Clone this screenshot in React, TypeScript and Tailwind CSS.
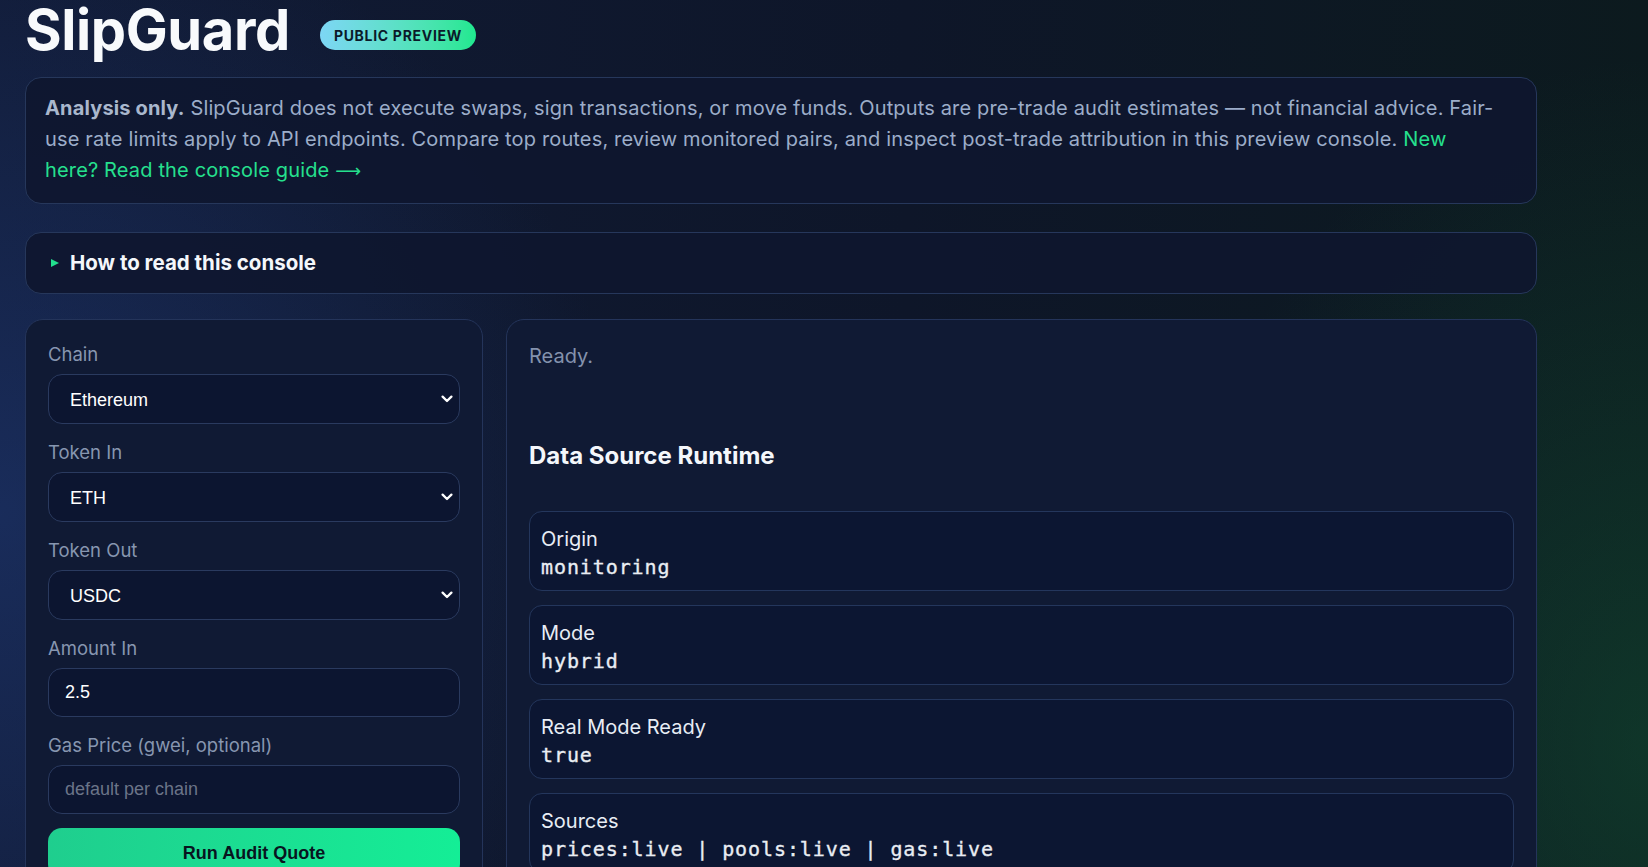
import React from "react";

const Chevron = () => (
  <svg
    width="12"
    height="8"
    viewBox="0 0 12 8"
    className="pointer-events-none absolute right-[7px] top-1/2 -translate-y-1/2"
  >
    <path
      d="M1.6 1.6 L6 6 L10.4 1.6"
      stroke="#ffffff"
      strokeWidth="2.3"
      fill="none"
      strokeLinecap="round"
      strokeLinejoin="round"
    />
  </svg>
);

const labelCls =
  "block text-[18.5px] leading-[24px] text-[#8796b0] mb-[8px]";

function SelectField({ label, value, options }: { label: string; value: string; options: string[] }) {
  return (
    <div>
      <label className={labelCls}>{label}</label>
      <div className="relative">
        <select
          defaultValue={value}
          className="block h-[50px] w-full appearance-none rounded-[14px] border border-[#2a3a5f] bg-[#0c1530] pl-[21px] pr-[30px] pt-[2px] text-[18px] text-white outline-none [font-family:'Liberation_Sans',Arial,sans-serif]"
        >
          {options.map((o) => (
            <option key={o} value={o}>
              {o}
            </option>
          ))}
        </select>
        <Chevron />
      </div>
    </div>
  );
}

function InputField({ label, value, placeholder }: { label: string; value?: string; placeholder?: string }) {
  return (
    <div>
      <label className={labelCls}>{label}</label>
      <input
        defaultValue={value}
        placeholder={placeholder}
        className="block h-[49px] w-full rounded-[14px] border border-[#2a3a5f] bg-[#0c1530] pl-[16px] text-[18px] text-white outline-none placeholder:text-[#6b7488] [font-family:'Liberation_Sans',Arial,sans-serif]"
      />
    </div>
  );
}

function RuntimeCard({ label, value }: { label: string; value: string }) {
  return (
    <div className="rounded-[13px] border border-[#24365c] bg-[#0c1632] px-[11px] pt-[13px] pb-[9px]">
      <div className="text-[20px] leading-[28px] text-[#e8edf5]">{label}</div>
      <div className="text-[20px] leading-[28px] tracking-[0.9px] text-[#e9edf3] [font-family:'DejaVu_Sans_Mono',monospace] [-webkit-text-stroke:0.35px_#e9edf3]">
        {value}
      </div>
    </div>
  );
}

export default function App() {
  return (
    <div className="min-h-screen w-full bg-[#0d1528] bg-[radial-gradient(ellipse_38%_55%_at_0%_45%,rgba(35,65,135,0.45),transparent),radial-gradient(ellipse_30%_60%_at_100%_65%,rgba(22,105,62,0.35),transparent),linear-gradient(90deg,#111b36_0%,#0e1629_55%,#0c1a1e_100%)] [font-family:Inter,sans-serif]">
      <div className="max-w-[1562px] px-[25px] pt-[2px] pb-[40px]">
        {/* Header */}
        <div className="flex h-[56px] items-center gap-[30px]">
          <h1 className="text-[56px] font-bold leading-[56px] tracking-[-0.4px] text-[#f8fafc]">
            SlipGuard
          </h1>
          <span className="mt-[10px] flex h-[30px] items-center rounded-full bg-gradient-to-r from-[#7dd6f5] to-[#1fe88f] px-[14px] text-[14px] font-bold tracking-[0.05em] text-[#0b1a2a]">
            PUBLIC PREVIEW
          </span>
        </div>

        {/* Info box */}
        <div className="mt-[19px] rounded-[16px] border border-[#26375b] bg-[#0e162f]/90 pl-[19px] pr-[36px] pt-[15px] pb-[17px] text-[20px] leading-[31px] tracking-[0.15px] text-[#9cadc9]">
          <strong className="font-bold text-[#a9b7cd]">Analysis only.</strong> SlipGuard does not execute swaps, sign
          transactions, or move funds. Outputs are pre-trade audit estimates — not financial advice. Fair-use rate limits
          apply to API endpoints. Compare top routes, review monitored pairs, and inspect post-trade attribution in this
          preview console.{" "}
          <a className="text-[#25e08e]">
            New here? Read the console guide <span className="[font-family:'DejaVu_Sans',sans-serif] text-[18px]">⟶</span>
          </a>
        </div>

        {/* Accordion */}
        <div className="mt-[28px] flex h-[62px] items-center rounded-[16px] border border-[#26375b] bg-[#0e162f]/90 pl-[24px]">
          <svg width="10" height="10" viewBox="0 0 10 10" className="mr-[10px]">
            <path d="M1 1 L9 5 L1 9 Z" fill="#22e08e" />
          </svg>
          <span className="text-[20.5px] font-bold text-[#f4f7fb]">How to read this console</span>
        </div>

        {/* Panels */}
        <div className="mt-[25px] grid grid-cols-[458px_1fr] items-start gap-[23px]">
          <div className="rounded-[18px] border border-[#24345a] bg-[#101a34] px-[22px] pt-[22px] pb-[22px]">
            <div className="flex flex-col gap-[16px]">
              <SelectField label="Chain" value="Ethereum" options={["Ethereum", "Arbitrum", "Base", "Optimism"]} />
              <SelectField label="Token In" value="ETH" options={["ETH", "USDC", "USDT", "WBTC"]} />
              <SelectField label="Token Out" value="USDC" options={["USDC", "ETH", "USDT", "DAI"]} />
              <InputField label="Amount In" value="2.5" />
              <InputField label="Gas Price (gwei, optional)" placeholder="default per chain" />
            </div>
            <button className="mt-[14px] h-[50px] w-full rounded-[14px] bg-gradient-to-r from-[#1fce8e] to-[#14ee96] text-[18px] font-bold text-[#08141f] [font-family:'Liberation_Sans',Arial,sans-serif]">
              Run Audit Quote
            </button>
            <div className="h-[200px]" />
          </div>

          <div className="rounded-[18px] border border-[#24345a] bg-[#101a34] px-[22px] pt-[22px] pb-[22px]">
            <div className="text-[20px] leading-[28px] text-[#8492ad]">Ready.</div>
            <h2 className="mt-[71px] text-[24px] font-bold leading-[30px] text-[#f4f7fb]">Data Source Runtime</h2>
            <div className="mt-[40px] flex flex-col gap-[14px]">
              <RuntimeCard label="Origin" value="monitoring" />
              <RuntimeCard label="Mode" value="hybrid" />
              <RuntimeCard label="Real Mode Ready" value="true" />
              <RuntimeCard label="Sources" value="prices:live | pools:live | gas:live" />
              <RuntimeCard label="Updated" value="just now" />
            </div>
          </div>
        </div>
      </div>
    </div>
  );
}
